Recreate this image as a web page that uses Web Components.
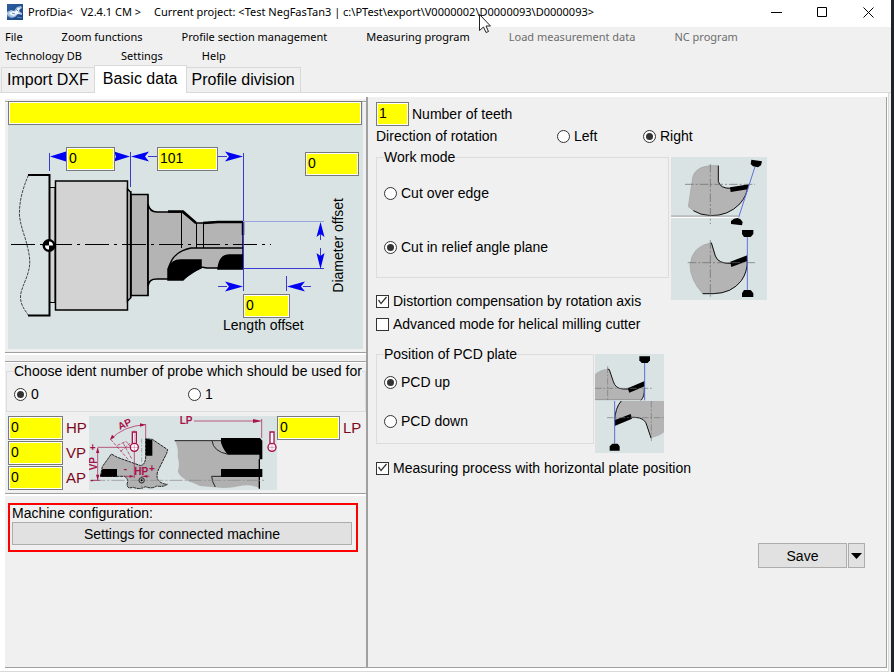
<!DOCTYPE html>
<html lang="en">
<head>
<meta charset="utf-8">
<title>ProfDia</title>
<style>
  html { background: #f0f0f0; }
  body { margin: 0; font: 14px/16px "Liberation Sans", Arial, sans-serif; color: #000; }
</style>
</head>
<body>
<pd-window></pd-window>

<script>
const BASE = `
  *, *::before, *::after { box-sizing: border-box; }
  button { font: inherit; color: inherit; background: none; border: 0; padding: 0; margin: 0; }
  svg { display: block; }
`;
function define(tag, render) {
  customElements.define(tag, class extends HTMLElement {
    connectedCallback() {
      if (this.shadowRoot) return;
      this.attachShadow({ mode: 'open' }).innerHTML = render(this);
    }
  });
}

/* ---------- title bar ---------- */
define('pd-titlebar', () => `
<style>${BASE}
  :host { display: flex; align-items: center; height: 27px; padding: 0 0 3px 7px; background: #fff;
    font: 11px/16px "Noto Sans", "Open Sans", sans-serif; white-space: nowrap; }
  .name { margin: 0 8px 0 5px; }
  .project { margin-left: 13px; flex: 1; overflow: hidden; }
  button { width: 46px; height: 24px; display: grid; place-items: center; }
</style>
<svg width="16" height="16" viewBox="0 0 16 16" aria-hidden="true">
  <defs><linearGradient id="b" x1="0" y1="0" x2="1" y2="1"><stop offset="0" stop-color="#2c5e9e"/><stop offset="1" stop-color="#1c4584"/></linearGradient></defs>
  <rect width="16" height="16" fill="url(#b)"/>
  <path d="M0 8l4-2 3 1 3-4 4-1 1 2-3 2 1 2 2 1v2l-4-1-3 3-4 1-4-3z" fill="#a9c4e2"/>
  <path d="M2 9l4-2 2 1 3-4 2 0-2 4 2 2-3 0-3 2-3-1z" fill="#f2f7fc"/>
  <path d="M5 9l3 1M9 5l2 2M0 12l5 2M10 13l5 1" stroke="#5f8cc0" fill="none"/>
</svg>
<span class="name">ProfDia&lt;</span><span>V2.4.1 CM &gt;</span>
<span class="project">Current project: &lt;Test NegFasTan3 | c:\\PTest\\export\\V0000002\\D0000093\\D0000093&gt;</span>
<button aria-label="Minimize"><svg width="11" height="11"><path d="M0 5.5h11" stroke="#000"/></svg></button>
<button aria-label="Maximize"><svg width="11" height="11"><path d="M.5.5h9v9h-9z" stroke="#000" fill="none"/></svg></button>
<button aria-label="Close"><svg width="11" height="11"><path d="M.5.5l10 10M10.500.5l-10 10" stroke="#000" fill="none"/></svg></button>
`);

/* ---------- menu ---------- */
define('pd-menubar', el => `
<style>${BASE}
  :host { display: block; font: 11px/19px "Noto Sans", "Open Sans", sans-serif; }
  nav { display: flex; flex-wrap: wrap; column-gap: 39px; padding: 0 64px 0 5px; }
  button:disabled { color: #6d6d6d; }
</style>
<nav>${el.getAttribute('items').split('|').map(t => t[0] === '-' ? `<button disabled>${t.slice(1)}</button>` : `<button>${t}</button>`).join('')}</nav>
`);

/* ---------- tabs ---------- */
define('pd-tabs', el => `
<style>${BASE}
  :host { display: block; font-size: 16px; line-height: 18px; }
  .bar { display: flex; align-items: flex-end; height: 28px; padding-left: 1px; border-bottom: 1px solid #d9d9d9; }
  button { height: 25px; padding: 0 5px; border: 1px solid #d9d9d9; border-bottom: 0; white-space: nowrap; }
  button:first-child { border-right: 0; }
  button:last-child { border-left: 0; }
  button[aria-selected=true] { height: 28px; padding: 0 8px 2px; margin-bottom: -1px; background: #fff; }
</style>
<div class="bar" role="tablist">${el.getAttribute('items').split('|').map(t => `<button role="tab" aria-selected="${t === el.getAttribute('active')}">${t}</button>`).join('')}</div>
`);

/* ---------- controls ---------- */
define('pd-field', el => `
<style>${BASE}
  :host { display: block; height: 24px; }
  input { display: block; width: 100%; height: 100%; margin: 0; padding: 0 2px 2px; border: 1px solid #7a7a7a; border-radius: 0;
    background: #ff0; box-shadow: inset 0 0 0 1px #fff; font: inherit; color: #000; outline: 0; }
</style>
<input type="text" aria-label="${el.getAttribute('label')}" value="${el.getAttribute('value') || ''}">
`);

define('pd-labelled-field', el => `
<style>${BASE}
  :host { display: flex; align-items: center; gap: 3px; height: 24px; }
  input { width: var(--field, 55px); height: 24px; margin: 0; padding: 0 2px 2px; border: 1px solid #7a7a7a; border-radius: 0;
    background: #ff0; box-shadow: inset 0 0 0 1px #fff; font: 14px "Liberation Sans", Arial, sans-serif; color: #000; outline: 0; }
</style>
<input id="f" type="text" value="${el.getAttribute('value')}"><label for="f"><slot></slot></label>
`);

define('pd-radios', el => {
  const boxed = el.hasAttribute('boxed');
  return `
<style>${BASE}
  :host { display: block; min-width: 0; }
  fieldset { margin: 0; min-width: 0; height: 100%; }
  .boxed { border: 1px solid #dcdcdc; padding: 0 7px; overflow: hidden; }
  .boxed legend { padding: 0; white-space: nowrap; }
  .plain { border: 0; padding: 0; display: flex; }
  .plain legend { float: left; padding: 0; width: 181px; }
  .opts { display: flex; gap: var(--gap, 0); flex-direction: var(--dir, row); padding: var(--pad, 0); }
  label { display: flex; flex: none; align-items: center; gap: 4px; width: var(--item, auto); white-space: nowrap; }
  input { appearance: none; flex: none; width: 13px; height: 13px; margin: 0; border: 1px solid #333; border-radius: 50%; background: #fff; display: grid; place-items: center; }
  input:checked::before { content: ""; width: 7px; height: 7px; border-radius: 50%; background: #333; }
</style>
<fieldset class="${boxed ? 'boxed' : 'plain'}"><legend>${el.getAttribute('label')}</legend>
<div class="opts">${el.getAttribute('options').split('|').map(t => `<label><input type="radio" name="r"${t === el.getAttribute('value') ? ' checked' : ''}>${t}</label>`).join('')}</div></fieldset>`;
});

define('pd-check', el => `
<style>${BASE}
  :host { display: block; }
  label { display: flex; align-items: center; gap: 4px; }
  input { appearance: none; flex: none; width: 13px; height: 13px; margin: 0; border: 1px solid #333; background: #fff; }
  input:checked::before { content: ""; display: block; width: 11px; height: 11px; background: #333;
    clip-path: polygon(1px 5px, 2px 4px, 4px 7px, 9px 1px, 10px 2px, 4px 9px); }
</style>
<label><input type="checkbox"${el.hasAttribute('checked') ? ' checked' : ''}><slot></slot></label>
`);

define('pd-button', () => `
<style>${BASE}
  :host { display: block; }
  button { display: grid; place-items: center; width: 100%; height: 100%; border: 1px solid #adadad; background: #e1e1e1; }
</style>
<button><slot></slot></button>
`);

/* ---------- tool dimension drawing ---------- */
define('pd-tool-drawing', () => `
<style>${BASE}
  :host { display: block; position: relative; }
  svg { width: 100%; background: #d9e3e3; }
  pd-field, .cap { position: absolute; }
  .title { left: 0; top: -1px; right: 1px; }
  .a { left: 58px; top: 45px; width: 49px; }
  .b { left: 149px; top: 45px; width: 61px; }
  .c { left: 297px; top: 50px; width: 54px; }
  .d { left: 235px; top: 192px; width: 47px; }
  .len { left: 215px; top: 215px; white-space: nowrap; }
  .dia { left: 322px; top: 96px; writing-mode: vertical-rl; transform: rotate(180deg); white-space: nowrap; }
</style>
<svg viewBox="8 102 355 247" aria-hidden="true">
  <g stroke="#000" stroke-width="1.500">
    <path d="M28.500 175C22 190 19 203 19.500 216C21 228 25 236 27 245C31 260 30 266 28 273C25 283 20 291 20.500 298C21 306 25 310 28.500 315.500" fill="none" stroke="#444" stroke-width="1" stroke-dasharray="3 1"/>
    <path d="M28 175H49.500V315.500H28" fill="none" stroke-width="2"/>
    <path d="M50 187.500h5v115h-5z" fill="#d3d3d3" stroke-width="1"/>
    <path d="M55.500 181h72v129h-72z" fill="#d3d3d3"/>
    <path d="M127.500 189l3 3v106l-3 3z" fill="#d3d3d3"/>
    <path d="M131 194.500h17v101h-17z" fill="#b4b4b4"/>
    <path d="M148 204C149 209 151 212 157 212H182L196 223L204 223L218 222H243V268H207L201 267L183 279H157C151 279 149 281 148 286z" fill="#b4b4b4"/>
    <path d="M131 191v107M148 195v101M181.500 212v36M196.500 223v25M203.500 223v25" fill="none" stroke-width="1"/>
    <path d="M168 211.500h15l13 11.500M203 223l15-1h25v13" fill="none" stroke-width="2.500"/>
    <path d="M169 268C171 256 181 250 191 248H243" fill="none"/>
    <path d="M168 280V269C170 263 175 260 181 260H201V268L190 273L183 280z"/>
    <path d="M218 269C219 260 223 255 229 255H243V269z"/>
  </g>
  <path d="M11 244.500h260" stroke="#000" fill="none" stroke-dasharray="24 5 3 5"/>
  <circle cx="49" cy="245.500" r="6.500"/><path d="M49 245.500V241.500A4 4 0 0 1 53 245.500zM49 245.500V249.500A4 4 0 0 1 45 245.500z" fill="#fff"/>
  <g stroke="#3a3ad0" fill="none">
    <path d="M49.500 153v18M130.500 152v35M243.500 153v138M286.500 276v15M148 156.500h9M218 156.500h9M243 268.500h81M320.500 225v15M320.500 248v15M303 286.500h8M218 286.500h9"/>
    <path d="M243 221.500h81" stroke="#9aa4e0"/>
  </g>
  <g fill="#0000f5">
    <path d="M50 156.500l16-5v10zM130 156.500l-16-5 2 5-2 5zM131 156.500l18-5-4 5 4 5zM243 156.500l-18-5 4 5-4 5zM243 286.500l-18-5 4 5-4 5zM287 286.500l18-5-4 5 4 5zM320.500 222l-4 15 4-3 4 3zM320.500 269l-4-16 4 3 4-3z"/>
  </g>
</svg>
<pd-field class="title" label="Name"></pd-field>
<pd-field class="a" label="Adapter length" value="0"></pd-field>
<pd-field class="b" label="Tool length" value="101"></pd-field>
<pd-field class="c" label="Diameter offset" value="0"></pd-field>
<pd-field class="d" label="Length offset" value="0"></pd-field>
<span class="cap len">Length offset</span><span class="cap dia">Diameter offset</span>
`);

/* ---------- probe drawing ---------- */
define('pd-probe-drawing', () => `
<style>${BASE} :host { display: block; } svg { width: 100%; height: 74px; background: #d9e3e3; }
 text { font: bold 30px "Liberation Sans", Arial, sans-serif; fill: #a8124a; }</style>
<svg viewBox="27 18 564 222" aria-hidden="true">
  <path d="M61 199L67 170L94 132L112 142L182 167C192 165 197 155 197 140V86L217 88L263 119L260 130L233 184Q228 205 236 212Q245 222 262 223Q250 232 230 228Q215 238 196 230Q180 240 160 232L147 234Q138 228 143 216Q144 206 134 199z" fill="#b1b1b1" stroke="#222" stroke-width="3" stroke-dasharray="9 2"/>
  <path d="M284 92H425L445 133H538V234Q510 222 480 228Q440 238 405 232L360 228Q345 220 325 214Q290 195 294 180Q300 165 293 140Q296 110 284 92z" fill="#b1b1b1"/>
  <path d="M284 92H425M396 92Q400 125 445 133M425 199H395Q396 215 406 231" fill="none" stroke="#222" stroke-width="3"/>
  <path d="M197 86L217 90V137H197zM67 177H111V200H61zM423 84H540L547 92V148H538V134H445Q432 124 423 98zM423 177H547V201H423zM536 148h4v88h-4z"/>
  <path d="M36 211H552" stroke="#888" stroke-width="2" stroke-dasharray="40 6 6 6"/>
  <path d="M185 86V238" stroke="#888" stroke-width="2" stroke-dasharray="14 5 4 5"/>
  <circle cx="185" cy="211" r="8" fill="none" stroke="#222" stroke-width="3"/><circle cx="185" cy="211" r="3"/>
  <g stroke="#a8124a" stroke-width="2" fill="none">
    <path d="M92 88Q130 48 196 44M197 42V84M53 112H163V204M53 114V211M32 211H60M134 199H155M185 199H208M342 33H530M545 27V84"/>
    <path d="M92 88L146 150M112 106L138 94L152 110M130 100L155 146M122 124L150 100" stroke-dasharray="10 4"/>
    <g fill="#fff" stroke-width="4"><path d="M157 66h12v42h-12z"/><circle cx="163" cy="112" r="12"/><path d="M570 66h12v42h-12z"/><circle cx="576" cy="112" r="12"/></g>
    <path d="M152 112H174M163 60V124M565 112H587M576 100V124" stroke-width="1"/>
  </g>
  <path d="M90 90l6-16 8 8zM197 44l-17-4v10zM53 112l-5 17h10zM53 211l-5-17h10zM163 199l-14-4v8zM188 199l14-4v8zM547 33l-28-6v12z" fill="#a8124a"/>
  <text transform="translate(119 60) rotate(-24)">AP</text><text x="299" y="42">LP</text><text x="163" y="194">HP</text>
  <text transform="translate(50 181) rotate(-90)">VP</text><text x="207" y="186">+</text><text x="29" y="122">+</text><text x="131" y="186">-</text><text x="31" y="220">-</text>
</svg>
`);

/* ---------- cutter sketches ---------- */
define('pd-workmode-drawing', () => `
<style>${BASE} :host { display: block; } svg { width: 96px; height: 143px; background: #d9e3e3; }</style>
<svg viewBox="33 21 288 429" aria-hidden="true">
  <path d="M175 47V94Q180 116 213 115L263 106Q262 135 240 161Q205 198 151 197Q110 194 85 170L97 90Q98 65 125 52Q145 45 175 47z" fill="#b4b4b4" stroke="#a2a2a2" stroke-width="2"/>
  <path d="M175 47V94Q180 116 213 115M263 108Q262 135 240 161Q205 198 151 197Q120 195 100 182" fill="none" stroke="#111" stroke-width="3"/>
  <path d="M210 112L268 103L264 118L212 126z"/>
  <path d="M75 103H285M151 42V222" stroke="#666" stroke-width="2" stroke-dasharray="26 6 6 6"/>
  <path d="M285 50L235 205" stroke="#6070e0" stroke-width="3"/>
  <path d="M274 29L306 34L303 46L294 52L279 49L272 42z"/>
  <path d="M33 198.500H236" stroke="#8a8a8a" stroke-width="3"/><path d="M33 202H236" stroke="#fff" stroke-width="4"/>
  <path d="M213 213Q222 204 232 204Q243 206 248 216L246 226L213 222z"/>
  <path d="M154 278L166 318Q175 342 213 340L262 325Q263 365 244 392Q215 430 160 431H128Q91 390 90 345Q96 288 154 278z" fill="#b4b4b4" stroke="#a2a2a2" stroke-width="2"/>
  <path d="M154 278L166 318Q175 342 213 340M262 330Q263 365 244 392Q215 430 160 431H128" fill="none" stroke="#111" stroke-width="3"/>
  <path d="M211 335L262 316V333L214 351z"/>
  <path d="M83 338H286M151 270V446" stroke="#666" stroke-width="2" stroke-dasharray="26 6 6 6"/>
  <path d="M262 260V425" stroke="#6070e0" stroke-width="3"/>
  <path d="M246 240H280V252L272 261H252L246 252zM246 441H280V430L272 420H252L246 430z"/>
</svg>
`);

define('pd-pcd-drawing', () => `
<style>${BASE} :host { display: block; } svg { width: 69px; height: 99px; background: #d9e3e3; }</style>
<svg viewBox="30 27 207 297" aria-hidden="true">
  <path d="M30 88Q45 72 72 72L84 107Q91 132 115 132L178 115V150L168 165H30z" fill="#b4b4b4"/>
  <path d="M30 164H168" stroke="#888" stroke-width="2"/>
  <path d="M68 72L73 74L84 107Q91 132 115 132H130M178 130Q179 155 168 166" fill="none" stroke="#111" stroke-width="3"/>
  <path d="M128 130L179 108V124L133 143z"/>
  <path d="M30 130H200M68 64V164" stroke="#777" stroke-width="2" stroke-dasharray="20 5 5 5"/>
  <path d="M179 54V166" stroke="#5b6cd8" stroke-width="3"/>
  <path d="M163 34H195V46L188 54H170L163 46z"/>
  <path d="M106 168H237V262Q222 275 198 279L186 243Q181 218 150 217L90 230Q88 190 106 168z" fill="#b4b4b4"/>
  <path d="M109 168Q90 188 89 230M140 217H150Q181 218 186 243L198 279" fill="none" stroke="#111" stroke-width="3"/>
  <path d="M88 226L137 207L141 221L89 243z"/>
  <path d="M66 218H237M199 168V288" stroke="#777" stroke-width="2" stroke-dasharray="20 5 5 5"/>
  <path d="M89 168V296" stroke="#5b6cd8" stroke-width="3"/>
  <path d="M74 317V304L82 296H98L104 304V317z"/>
</svg>
`);

/* ---------- panels ---------- */
define('pd-left-panel', () => `
<style>${BASE}
  :host { display: block; min-width: 0; padding-top: 2px; border-right: 2px solid #a0a0a0; background: linear-gradient(#fff 2px, #f0f0f0 2px); }
  section { border-top: 1px solid #a0a0a0; border-bottom: 1px solid #a0a0a0; box-shadow: 0 2px #fff, inset 0 1px #fff; }
  .tool { margin-top: 2px; padding: 0 3px 3px; }
  .probe { margin-top: 8px; padding: 1px 0 3px 1px; }
  .probe pd-radios { --pad: 7px 0 9px; --item: 174px; }
  .grid { display: grid; grid-template-columns: 81px 1fr 89px; padding: 4px 0 0 2px; font-size: 15px; color: #7d0a1c; }
  .col { display: grid; gap: 1px; align-content: start; }
  .lp { --field: 63px; }
  .machine { margin: 9px 8px 0 3px; padding: 0 4px 5px 2px; border: 2px solid #f00; }
  .machine pd-button { height: 23px; margin-top: 1px; }
</style>
<section class="tool"><pd-tool-drawing></pd-tool-drawing></section>
<section class="probe">
  <pd-radios boxed label="Choose ident number of probe which should be used for" options="0|1" value="0"></pd-radios>
  <div class="grid">
    <div class="col"><pd-labelled-field value="0">HP</pd-labelled-field><pd-labelled-field value="0">VP</pd-labelled-field><pd-labelled-field value="0">AP</pd-labelled-field></div>
    <pd-probe-drawing></pd-probe-drawing>
    <pd-labelled-field class="lp" value="0">LP</pd-labelled-field>
  </div>
</section>
<div class="machine">Machine configuration:<pd-button>Settings for connected machine</pd-button></div>
`);

define('pd-right-panel', () => `
<style>${BASE}
  :host { display: block; padding: 5px 21px 0 8px; background: #f0f0f0; border-right: 1px solid #a0a0a0; }
  .teeth { --field: 33px; }
  .dir { --item: 86px; margin-top: 2px; }
  .row { display: flex; gap: 2px; align-items: flex-end; }
  .mode { width: 293px; height: 129px; --dir: column; --gap: 38px; --pad: 20px 0 0; margin: 5px 0 0; }
  .pcd { width: 218px; height: 98px; --dir: column; --gap: 23px; --pad: 12px 0 0; }
  .row pd-workmode-drawing { margin-bottom: -22px; }
  .row pd-pcd-drawing { margin-bottom: -9px; }
  .c1 { margin-top: 15px; } .c2 { margin-top: 7px; } .c3 { margin-top: 16px; }
  .second { margin-top: 14px; gap: 1px; }
  .save { display: flex; justify-content: flex-end; gap: 1px; margin-top: 67px; }
  .save pd-button { height: 25px; width: 89px; }
  .save .drop { width: 17px; }
</style>
<pd-labelled-field class="teeth" value="1">Number of teeth</pd-labelled-field>
<pd-radios class="dir" label="Direction of rotation" options="Left|Right" value="Right"></pd-radios>
<div class="row"><pd-radios class="mode" boxed label="Work mode" options="Cut over edge|Cut in relief angle plane" value="Cut in relief angle plane"></pd-radios><pd-workmode-drawing></pd-workmode-drawing></div>
<pd-check class="c1" checked>Distortion compensation by rotation axis</pd-check>
<pd-check class="c2">Advanced mode for helical milling cutter</pd-check>
<div class="row second"><pd-radios class="pcd" boxed label="Position of PCD plate" options="PCD up|PCD down" value="PCD up"></pd-radios><pd-pcd-drawing></pd-pcd-drawing></div>
<pd-check class="c3" checked>Measuring process with horizontal plate position</pd-check>
<div class="save"><pd-button>Save</pd-button><pd-button class="drop"><svg width="11" height="6" viewBox="0 0 11 6" role="img" aria-label="More save options"><path d="M0 0h11L5.500 6z"/></svg></pd-button></div>
`);

/* ---------- window ---------- */
define('pd-window', () => `
<style>${BASE}
  :host { display: flex; flex-direction: column; position: relative; min-height: 100vh; background: #f0f0f0; border-right: 3px solid #202428; box-sizing: border-box; }
  main { flex: 1; display: grid; grid-template-columns: minmax(0, 363px) 1fr; margin-right: 2px; padding: 4px 1px 3px 5px; background: #fff;
    border-right: 1px solid #d9d9d9; border-bottom: 1px solid #d9d9d9; }
  pd-left-panel, pd-right-panel { border-bottom: 1px solid #a0a0a0; }
  .pointer { position: absolute; left: 479px; top: 14px; }
</style>
<pd-titlebar></pd-titlebar>
<pd-menubar items="File|Zoom functions|Profile section management|Measuring program|-Load measurement data|-NC program|Technology DB|Settings|Help"></pd-menubar>
<pd-tabs items="Import DXF|Basic data|Profile division" active="Basic data"></pd-tabs>
<main><pd-left-panel></pd-left-panel><pd-right-panel></pd-right-panel></main>
<svg class="pointer" width="13" height="20" viewBox="0 0 13 20" aria-hidden="true"><path d="M.5.5V16.500L4.500 13L7 18.500L9.500 17.500L7 12H11.500z" fill="#fff" stroke="#222"/></svg>
`);
</script>
</body>
</html>
